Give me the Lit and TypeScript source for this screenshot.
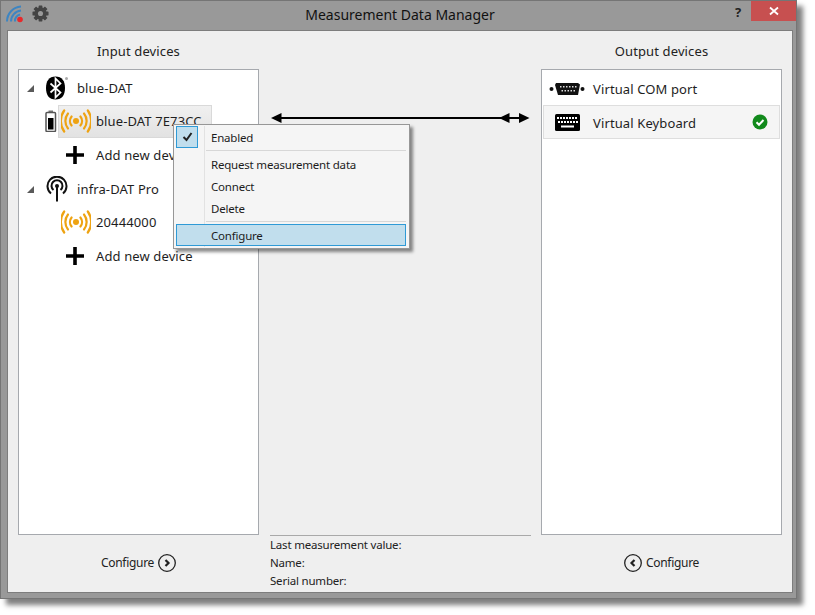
import { LitElement, html, css, svg } from "lit";
import { customElement } from "lit/decorators.js";

const signal = html`<svg class="sig" width="30" height="24" viewBox="0 0 30 24" fill="none" stroke="#eea312" stroke-width="2.2" stroke-linecap="round">
  <circle cx="15" cy="12" r="3" fill="#eea312" stroke="none"/>
  <path d="M10.6 7.5a7 7 0 0 0 0 9M19.4 7.5a7 7 0 0 1 0 9"/>
  <path d="M7 4.5a12 12 0 0 0 0 15M23 4.5a12 12 0 0 1 0 15"/>
  <path d="M3.2 1.5a18 18 0 0 0 0 21M26.8 1.5a18 18 0 0 1 0 21"/>
</svg>`;

const plus = html`<svg width="18" height="18" viewBox="0 0 18 18"><path d="M7.2 0h3.6v7.2H18v3.6h-7.2V18H7.2v-7.2H0V7.2h7.2z" fill="#000"/></svg>`;

const expander = html`<svg class="exp" width="7" height="7" viewBox="0 0 7 7"><path d="M7 0v7H0z" fill="#5a5a5a"/></svg>`;

const chevron = (left: boolean) => html`<svg width="18" height="18" viewBox="0 0 18 18" fill="none" stroke="#222">
  <circle cx="9" cy="9" r="8.3" stroke-width="1.3"/>
  <path d=${left ? "M10.5 6 7.5 9l3 3" : "M7.5 6l3 3-3 3"} stroke-width="2.2"/>
</svg>`;

@customElement("app-root")
export class AppRoot extends LitElement {
  static styles = css`
    :host { display: block; width: 815px; height: 615px; background: #fff; overflow: hidden;
      font-family: "Noto Sans", "Open Sans", sans-serif; color: #1e1e1e; font-size: 13px; letter-spacing: .12px; }
    .win { position: relative; box-sizing: border-box; width: 797px; height: 599px; background: #999;
      border: 1px solid #757575; box-shadow: 6px 6px 5px rgba(0,0,0,.5); display: flex; flex-direction: column; }
    .title { height: 29px; flex: none; display: flex; align-items: flex-start; }
    .ticons { width: 0; display: flex; }
    .ticons svg { flex: none; }
    .wifi { margin: 4px 0 0 5px; }
    .gear { margin: 4px 0 0 7.5px; }
    .tname { flex: 1; text-align: center; font-size: 14px; line-height: 28px; color: #111; padding-left: 64px; letter-spacing: 0; }
    .help { font-weight: 700; font-size: 13px; line-height: 23px; color: #222; width: 13px; margin-right: 3px; }
    .close { width: 45px; height: 20px; background: #c75050; display: flex; align-items: center; justify-content: center; }
    .content { box-sizing: border-box; width: 786px; height: 563px; margin-left: 6px; border: 1px solid #7d7d7d;
      background: #efefef; padding: 0 10px; display: grid; grid-template-columns: 241px 262px 241px; column-gap: 10px;
      grid-template-rows: 38px 466px 57px; }
    .head { text-align: center; line-height: 40px; font-size: 13px; color: #222; }
    .panel { box-sizing: border-box; background: #fff; border: 1px solid #a6a9ae; }
    .tree { padding-top: 1px; }
    .row { height: 33.6px; display: flex; align-items: center; white-space: nowrap; }
    .exp { margin-left: 8px; margin-top: 1px; flex: none; }
    .rooticon { width: 26px; margin-left: 10px; display: flex; justify-content: center; flex: none; margin-right: 7px; }
    .child { padding-left: 39px; }
    .child .body { display: flex; align-items: center; box-sizing: border-box; height: 33px; padding: 0 7px 0 2px; gap: 5px; border: 1px solid transparent; }
    .child .sel { background: linear-gradient(#f0f0f0, #e2e2e2); border-color: #d9d9d9; width: 154px; overflow: hidden; }
    .batt { position: absolute; left: 44px; top: 109px; }
    .add { padding-left: 47px; gap: 12px; }
    .middle { padding-left: 1px; }
    .arrows { display: block; margin: 43px 0 0 1px; }
    .info { border-top: 1px solid #a9a9a9; margin-left: 1px; font-size: 11.5px; letter-spacing: -.2px; line-height: 18px; color: #222; }
    .cfg { display: flex; align-items: center; justify-content: center; gap: 4px; font-size: 12px; letter-spacing: -.3px; color: #222; padding-bottom: 2px; }
    .out { padding: 1px; }
    .orow { box-sizing: border-box; height: 34px; display: flex; align-items: center; border: 1px solid transparent; white-space: nowrap; position: relative; }
    .orow.first { padding-top: 2px; }
    .orow.on { background: #f5f5f5; border-color: #dedede; }
    .oicon { width: 44px; margin-left: 1px; margin-right: 4px; display: flex; justify-content: center; flex: none; }
    .otext { margin-top: 2px; }
    .ok { margin-left: auto; margin-right: 11px; }
    .menu { position: absolute; left: 172px; top: 123px; box-sizing: border-box; width: 237px; height: 125px;
      background: #f5f5f5; border: 1px solid #979797; box-shadow: 3px 3px 3px rgba(0,0,0,.45); font-size: 11.5px; letter-spacing: -.2px; color: #1c1c1c;
      padding: 1px 3px 2px 2px; }
    .rail { position: absolute; left: 30px; top: 1px; bottom: 1px; width: 1px; background: #e2e2e2; }
    .mi { position: relative; height: 22px; display: flex; align-items: center; padding-left: 35px; box-sizing: border-box; }
    .mi.up { padding-bottom: 2px; }
    .mi.hi { background: #c1deed; border: 1px solid #2f9ad6; padding-left: 34px; }
    .check { position: absolute; left: 0; top: 0; width: 22px; height: 22px; box-sizing: border-box; background: #c1deed; border: 1px solid #2f9ad6;
      display: flex; align-items: center; justify-content: center; }
    .sep { height: 1px; background: #d7d7d7; margin: 2px 0 3px 30px; position: relative; }
    .sep2 { margin: 1px 0 2px 30px; }
  `;

  render() {
    return html`<div class="win">
      <div class="title">
        <div class="ticons">
          <svg class="wifi" width="18" height="18" viewBox="0 0 18 18" fill="none" stroke="#3d85c2" stroke-width="2">
            <path d="M1 16.500A15 15 0 0 1 15 1.500"/><path d="M5 16.500A11 11 0 0 1 15 5.500"/><path d="M9 16.500A7 7 0 0 1 14 9.500"/>
            <circle cx="14" cy="14.500" r="2.800" fill="#e9282a" stroke="none"/>
          </svg>
          <svg class="gear" width="17" height="17" viewBox="0 0 18 18">
            <g fill="#444">${[0, 45, 90, 135].map((a) => svg`<rect x="7" y="0.500" width="4" height="17" rx="0.500" transform="rotate(${a} 9 9)"/>`)}</g>
            <circle cx="9" cy="9" r="5" fill="none" stroke="#444" stroke-width="3"/>
            <circle cx="9" cy="9" r="2.700" fill="#999"/>
          </svg>
        </div>
        <div class="tname">Measurement Data Manager</div>
        <div class="help">?</div>
        <div class="close"><svg width="10" height="10" viewBox="0 0 10 10"><path d="M1 1.500l8 7M9 1.500l-8 7" stroke="#fff" stroke-width="1.800"/></svg></div>
      </div>
      <div class="content">
        <div class="head">Input devices</div>
        <div></div>
        <div class="head">Output devices</div>

        <div class="panel tree">
          <div class="row">${expander}
            <div class="rooticon"><svg width="24" height="24" viewBox="0 0 24 24">
              <path d="M10.500 0.500C4 0.500 1 5 1 12s3 11.500 9.500 11.500S20 19 20 12 17 .5 10.500 .5z" fill="#000"/>
              <path d="M5.500 7.500l10 9-5 5V2.500l5 5-10 9" fill="none" stroke="#fff" stroke-width="1.700"/>
              <circle cx="21.500" cy="2.500" r="1.500" fill="#aaa"/>
            </svg></div>
            blue-DAT
          </div>
          <div class="row child">
            <div class="body sel">${signal}<span>blue-DAT 7E73CC</span></div>
          </div>
          <div class="row add">${plus}<span>Add new device</span></div>
          <div class="row">${expander}
            <div class="rooticon"><svg width="22" height="26" viewBox="0 0 22 26" fill="none" stroke="#111" stroke-width="2">
              <path d="M5 17.500a9.500 9.500 0 1 1 12 0"/><path d="M7.500 14a5.500 5.500 0 1 1 7 0"/>
              <circle cx="11" cy="10" r="2" fill="#111" stroke="none"/><path d="M11 10v15.500"/>
            </svg></div>
            infra-DAT Pro
          </div>
          <div class="row child"><div class="body">${signal}<span>20444000</span></div></div>
          <div class="row add">${plus}<span>Add new device</span></div>
        </div>

        <div class="middle">
          <svg class="arrows" width="260" height="12" viewBox="0 0 260 12">
            <path d="M4 6H250" stroke="#000" stroke-width="2"/>
            <path d="M0 6l10.500-5v10zM228 6l10.500-5v10zM258.500 6l-10.500-5v10z" fill="#000"/>
          </svg>
        </div>

        <div class="panel out">
          <div class="orow first">
            <div class="oicon"><svg width="36" height="14" viewBox="0 0 36 14">
              <circle cx="2.500" cy="7" r="2" fill="#111"/><circle cx="33.500" cy="7" r="2" fill="#111"/>
              <path d="M7 1h22l2 1.500-2 10.500H9L6 3z" fill="#111"/>
              <g fill="#ddd">${[11, 14, 17, 20, 23, 26].map((x) => svg`<rect x="${x}" y="4" width="1.500" height="1.500"/>`)}${[12.5, 15.5, 18.5, 21.5, 24.5].map((x) => svg`<rect x="${x}" y="8" width="1.500" height="1.500"/>`)}</g>
            </svg></div>
            Virtual COM port
          </div>
          <div class="orow on">
            <div class="oicon"><svg width="25" height="17" viewBox="0 0 25 17">
              <rect width="25" height="17" rx="1.500" fill="#000"/>
              <g fill="#fff">${[2, 5, 8, 11, 14, 17, 20].map((x) => svg`<rect x="${x}" y="3" width="2" height="2"/>`)}${[3, 6, 9, 12, 15, 18, 21].map((x) => svg`<rect x="${x}" y="7" width="2" height="2"/>`)}</g>
              <rect x="6" y="11.500" width="13" height="2" fill="#fff"/>
            </svg></div>
            <span class="otext">Virtual Keyboard</span>
            <svg class="ok" width="16" height="16" viewBox="0 0 16 16"><circle cx="8" cy="8" r="7.500" fill="#128a1c"/><path d="M4.500 8.200l2.500 2.500 4.500-4.700" fill="none" stroke="#fff" stroke-width="2"/></svg>
          </div>
        </div>

        <div class="cfg">Configure ${chevron(false)}</div>
        <div class="info">Last measurement value:<br />Name:<br />Serial number:</div>
        <div class="cfg">${chevron(true)} Configure</div>
      </div>

      <svg class="batt" width="12" height="22" viewBox="0 0 12 22">
        <rect x="3.500" y="0.500" width="4.500" height="2" fill="#777"/>
        <rect x="1" y="2.500" width="9.500" height="19" rx="1" fill="#fff" stroke="#555" stroke-width="1.500"/>
        <rect x="3" y="8" width="5.500" height="11.500" fill="#000"/>
      </svg>

      <div class="menu">
        <div class="rail"></div>
        <div class="mi"><span class="check"><svg width="11" height="10" viewBox="0 0 11 10"><path d="M1.500 5l3 3 5-7" fill="none" stroke="#222" stroke-width="2"/></svg></span>Enabled</div>
        <div class="sep"></div>
        <div class="mi up">Request measurement data</div>
        <div class="mi up">Connect</div>
        <div class="mi up">Delete</div>
        <div class="sep sep2"></div>
        <div class="mi hi">Configure</div>
      </div>
    </div>`;
  }
}
